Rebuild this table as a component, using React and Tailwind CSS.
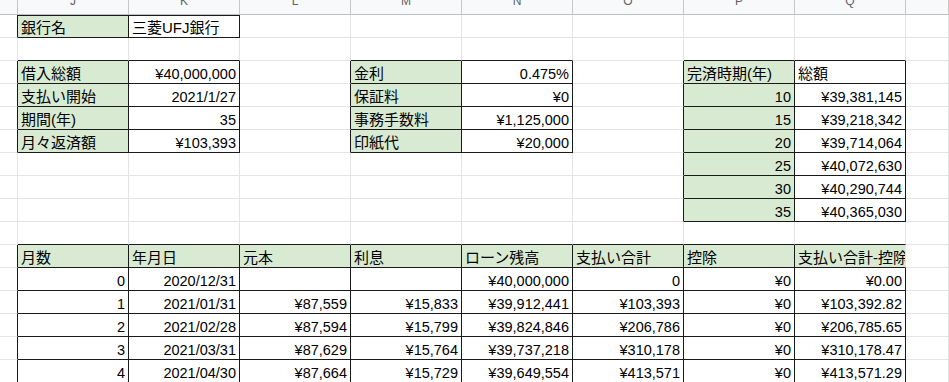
import React from 'react';

const COLS = ['I', 'J', 'K', 'L', 'M', 'N', 'O', 'P', 'Q', 'R'];

// sheet body: 16 rows x 10 cols (I..R), null = empty cell outside any table
const grid = Array.from({ length: 16 }, () => Array(10).fill(null));
const put = (r, c, v, green = false, right = false) => {
  grid[r][c] = { v, green, right };
};

// bank
put(0, 1, '銀行名', true);
put(0, 2, '三菱UFJ銀行');

// loan summary
[
  ['借入総額', '¥40,000,000'],
  ['支払い開始', '2021/1/27'],
  ['期間(年)', '35'],
  ['月々返済額', '¥103,393'],
].forEach(([k, v], i) => {
  put(2 + i, 1, k, true);
  put(2 + i, 2, v, false, true);
});

// costs
[
  ['金利', '0.475%'],
  ['保証料', '¥0'],
  ['事務手数料', '¥1,125,000'],
  ['印紙代', '¥20,000'],
].forEach(([k, v], i) => {
  put(2 + i, 4, k, true);
  put(2 + i, 5, v, false, true);
});

// totals by payoff period
put(2, 7, '完済時期(年)', true);
put(2, 8, '総額');
[
  ['10', '¥39,381,145'],
  ['15', '¥39,218,342'],
  ['20', '¥39,714,064'],
  ['25', '¥40,072,630'],
  ['30', '¥40,290,744'],
  ['35', '¥40,365,030'],
].forEach(([k, v], i) => {
  put(3 + i, 7, k, true, true);
  put(3 + i, 8, v, false, true);
});

// schedule
['月数', '年月日', '元本', '利息', 'ローン残高', '支払い合計', '控除', '支払い合計-控除'].forEach((h, i) =>
  put(10, 1 + i, h, true)
);
[
  ['0', '2020/12/31', '', '', '¥40,000,000', '0', '¥0', '¥0.00'],
  ['1', '2021/01/31', '¥87,559', '¥15,833', '¥39,912,441', '¥103,393', '¥0', '¥103,392.82'],
  ['2', '2021/02/28', '¥87,594', '¥15,799', '¥39,824,846', '¥206,786', '¥0', '¥206,785.65'],
  ['3', '2021/03/31', '¥87,629', '¥15,764', '¥39,737,218', '¥310,178', '¥0', '¥310,178.47'],
  ['4', '2021/04/30', '¥87,664', '¥15,729', '¥39,649,554', '¥413,571', '¥0', '¥413,571.29'],
].forEach((row, i) => row.forEach((v, j) => put(11 + i, 1 + j, v, false, true)));

const inTable = (r, c) => grid[r] != null && grid[r][c] != null;

const Cell = ({ r, c }) => {
  const cell = grid[r][c];
  const darkR = (inTable(r, c) || inTable(r, c + 1)) && !(r === 10 && c === 8);
  const darkB = inTable(r, c) || inTable(r + 1, c);
  const darkT = r === 0 && inTable(r, c);
  return (
    <div
      className={`flex items-end overflow-hidden whitespace-nowrap border-r border-b pb-[2px] leading-none ${
        darkR ? 'border-r-[#1a1a1a]' : 'border-r-[#e2e3e3]'
      } ${darkB ? 'border-b-[#1a1a1a]' : 'border-b-[#e2e3e3]'} ${darkT ? 'border-t border-t-[#1a1a1a]' : ''} ${
        cell && cell.green ? 'bg-[#d9ead3]' : 'bg-white'
      } ${cell && cell.right ? 'justify-end pr-[3px]' : 'justify-start pl-[3px] text-[15px]'}`}
    >
      {cell ? cell.v : ''}
    </div>
  );
};

export default function App() {
  return (
    <div
      className="h-[382px] w-[949px] overflow-hidden bg-white text-[14.5px] text-black"
      style={{ fontFamily: '"Liberation Sans", Arial, "Noto Sans CJK JP", sans-serif' }}
    >
      <div className="grid grid-cols-[18px_repeat(8,111px)_1fr] grid-rows-[15px_repeat(16,23px)]">
        {COLS.map((l, c) => (
          <div
            key={l}
            className="flex items-end justify-center overflow-hidden border-r border-b border-r-[#c7c7c7] border-b-[#c0c0c0] bg-[#f8f9fa] pb-[7px] text-[12px] leading-none text-[#5f6368]"
          >
            {c > 0 && c < 9 ? l : ''}
          </div>
        ))}
        {grid.map((row, r) => row.map((_, c) => <Cell key={`${r}-${c}`} r={r} c={c} />))}
      </div>
    </div>
  );
}
